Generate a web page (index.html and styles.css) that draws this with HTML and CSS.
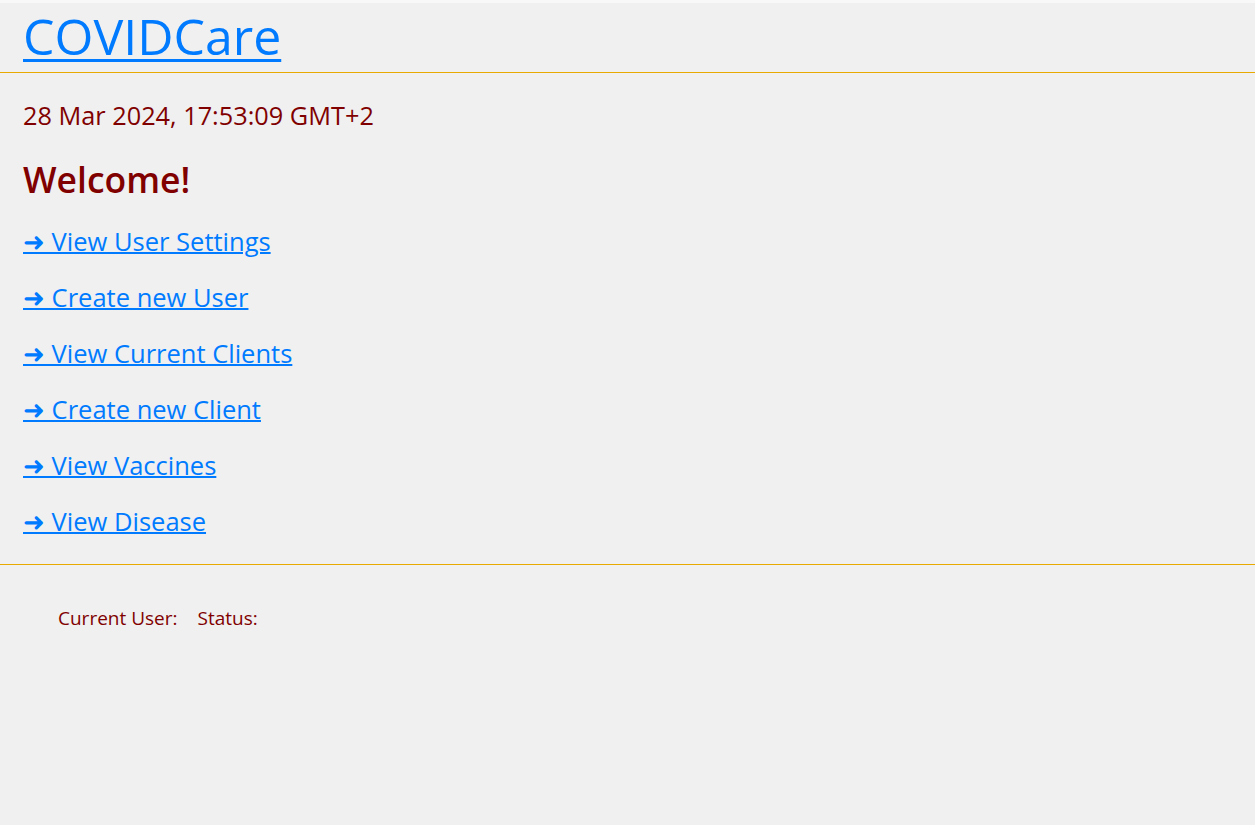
FILE: index.html
```html
<!DOCTYPE html>
<html lang="en">
<head>
<meta charset="utf-8">
<title>COVIDCare</title>
<link rel="stylesheet" href="styles.css">
</head>
<body>
<div class="page">
  <header class="site-header">
    <a class="brand" href="#">COVIDCare</a>
  </header>
  <main class="content">
    <p class="datetime">28 Mar 2024, 17:53:09 GMT+2</p>
    <h1 class="welcome">Welcome!</h1>
    <nav class="menu">
      <a class="menu-link" href="#">&#10140; View User Settings</a>
      <a class="menu-link" href="#">&#10140; Create new User</a>
      <a class="menu-link" href="#">&#10140; View Current Clients</a>
      <a class="menu-link" href="#">&#10140; Create new Client</a>
      <a class="menu-link" href="#">&#10140; View Vaccines</a>
      <a class="menu-link" href="#">&#10140; View Disease</a>
    </nav>
  </main>
  <footer class="site-footer">
    <span class="footer-item">Current User:</span>
    <span class="footer-item">Status:</span>
  </footer>
</div>
</body>
</html>
```

FILE: styles.css
```css
html {
  background: #f8f8f8;
}
body {
  margin: 0;
  padding-top: 3px;
  font-family: "Open Sans", "Liberation Sans", sans-serif;
}
.page {
  background: #f0f0f0;
  min-height: 822px;
}
.site-header {
  height: 69px;
  border-bottom: 1px solid #e8a900;
  padding-left: 23px;
  display: flex;
  align-items: flex-start;
}
.brand {
  font-size: 50px;
  line-height: 70px;
  color: #007bff;
  text-decoration: underline;
  text-decoration-thickness: 3px;
  text-underline-offset: 4px;
  margin-top: -2px;
}
.content {
  padding: 25px 23px 0 23px;
  height: 466px;
  border-bottom: 1px solid #e8a900;
}
.datetime {
  margin: 0;
  font-size: 25.3px;
  line-height: 34px;
  color: #800000;
}
.welcome {
  margin: 24px 0 0 0;
  font-size: 35.5px;
  line-height: 46px;
  font-weight: 600;
  color: #800000;
}
.menu {
  display: flex;
  flex-direction: column;
  align-items: flex-start;
  gap: 22px;
  margin-top: 22px;
}
.menu-link {
  font-size: 25.5px;
  line-height: 34px;
  color: #007bff;
  text-decoration: underline;
  text-decoration-thickness: 2px;
}
.site-footer {
  display: flex;
  gap: 20px;
  padding: 41px 58px;
  font-size: 19px;
  line-height: 24px;
  color: #800000;
}
```
